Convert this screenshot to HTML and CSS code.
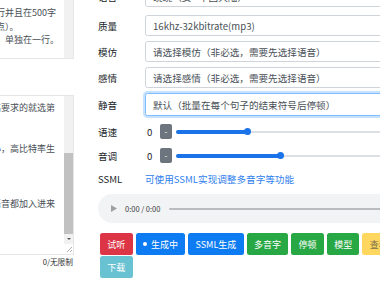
FILE: index.html
```html
<!DOCTYPE html>
<html lang="zh-CN">
<head>
    <meta charset="UTF-8">
    <meta name="viewport" content="width=device-width, initial-scale=1.0">
    <title>文本转语音</title>
    <link rel="stylesheet" href="styles.css">
</head>
<body>
    <div class="page">
        <section class="text-col">
            <div class="textbox box-first">
                <div class="textbox-text">将要转换的文字放在这里，每段一行并且在500字
以内，超出部分会被截断（不含标点）。
多角色对话时，每一个角色的台词，单独在一行。
</div>
                <div class="scrollbar"></div>
            </div>
            <div class="textbox box-second">
                <div class="textbox-text">3、如果对于生成音频的质量有较高要求的就选第
一个选项。
4、质量选项越靠后
5、低比特率生成速度较快文件较小，高比特率生
成速度较慢。
6、多音字请使用SSML功能。
7、停顿可以使用省略号。
8、模型功能会将选中的所有参考语音都加入进来
一起生成。
</div>
                <div class="scrollbar">
                    <div class="sb-track"></div>
                    <div class="sb-thumb"></div>
                    <div class="sb-arrow"><span></span></div>
                    <div class="sb-corner">
                        <svg width="9" height="9" viewBox="0 0 9 9"><path d="M8 3L3 8M8 6L6 8" stroke="#9a9a9a" stroke-width="0.8"/></svg>
                    </div>
                </div>
            </div>
            <div class="counter">0/无限制</div>
        </section>

        <section class="form-col">
            <div class="form-row row-first">
                <label>语音</label>
                <select class="form-control"><option>晓晓（女 - 中国大陆）</option></select>
            </div>
            <div class="form-row">
                <label>质量</label>
                <select class="form-control"><option>16khz-32kbitrate(mp3)</option></select>
            </div>
            <div class="form-row">
                <label>模仿</label>
                <select class="form-control"><option>请选择模仿（非必选，需要先选择语音）</option></select>
            </div>
            <div class="form-row">
                <label>感情</label>
                <select class="form-control"><option>请选择感情（非必选，需要先选择语音）</option></select>
            </div>
            <div class="form-row row-silence">
                <label>静音</label>
                <select class="form-control is-focus"><option>默认（批量在每个句子的结束符号后停顿）</option></select>
            </div>
            <div class="slider-row">
                <label>语速</label>
                <span class="slider-val">0</span>
                <button class="btn-step">-</button>
                <div class="range">
                    <div class="range-track"></div>
                    <div class="range-fill" style="width: 28.2%"></div>
                    <div class="range-thumb" style="left: 28.2%"></div>
                </div>
            </div>
            <div class="slider-row">
                <label>音调</label>
                <span class="slider-val">0</span>
                <button class="btn-step">-</button>
                <div class="range">
                    <div class="range-track"></div>
                    <div class="range-fill" style="width: 41.3%"></div>
                    <div class="range-thumb" style="left: 41.3%"></div>
                </div>
            </div>
            <div class="ssml-row">
                <label>SSML</label>
                <a href="#">可使用SSML实现调整多音字等功能</a>
            </div>
            <div class="player">
                <svg class="play-icon" width="6" height="7" viewBox="0 0 6 7"><path d="M0 0L6 3.5L0 7Z" fill="#a0a0a0"/></svg>
                <span class="player-time">0:00 / 0:00</span>
                <div class="player-bar"></div>
            </div>
            <div class="actions">
                <button class="btn btn-red">试听</button>
                <button class="btn btn-blue"><span class="dot"></span>生成中</button>
                <button class="btn btn-blue">SSML生成</button>
                <button class="btn btn-green">多音字</button>
                <button class="btn btn-green">停顿</button>
                <button class="btn btn-green">模型</button>
                <button class="btn btn-yellow">查看历史</button>
                <button class="btn btn-cyan">下载</button>
            </div>
        </section>
    </div>
</body>
</html>
```

FILE: styles.css
```css
* {
    margin: 0;
    padding: 0;
    box-sizing: border-box;
}

body {
    font-family: "Noto Sans CJK SC", "Noto Sans", sans-serif;
    font-size: 9.6px;
    color: #212529;
    background: #fff;
    width: 380px;
    height: 282px;
    overflow: hidden;
}

.page {
    display: flex;
    align-items: flex-start;
    margin-left: -147px;
    width: 700px;
}

/* left: text input */
.text-col {
    width: 221px;
    flex-shrink: 0;
}

.textbox {
    display: flex;
    border: 1px solid #e4e7ea;
    background: #fff;
}

.textbox-text {
    flex: 1;
    padding: 7px 4px 0 7px;
    font-size: 9px;
    line-height: 13.7px;
    color: #495057;
    white-space: pre;
    overflow: hidden;
}

.box-first {
    height: 61px;
    margin-top: -2px;
}

.box-second {
    height: 160px;
    margin-top: 36px;
}

.box-second .textbox-text {
    padding-top: 5px;
}

.scrollbar {
    width: 9px;
    background: #f1f1f1;
    display: flex;
    flex-direction: column;
}

.sb-track {
    flex: 1;
}

.sb-thumb {
    height: 81px;
    background: #c1c1c1;
}

.sb-arrow {
    height: 10px;
    display: flex;
    align-items: center;
    justify-content: center;
}

.sb-arrow span {
    border-left: 2px solid transparent;
    border-right: 2px solid transparent;
    border-top: 2px solid #555;
}

.sb-corner {
    height: 10px;
    background: #fff;
}

.sb-corner svg {
    display: block;
}

.counter {
    text-align: right;
    font-size: 7.7px;
    line-height: 12px;
    margin-top: 1px;
    padding-right: 1px;
    color: #333;
}

/* right: settings */
.form-col {
    width: 330px;
    flex-shrink: 0;
    margin-left: 24px;
    margin-top: -14px;
}

.form-row {
    display: flex;
    align-items: center;
    margin-bottom: 5px;
}

.form-row.row-first {
    margin-bottom: 8px;
}

.form-row label, .slider-row label, .ssml-row label {
    width: 47px;
    flex-shrink: 0;
}

.form-control {
    flex: 1;
    appearance: none;
    height: 21px;
    padding: 0 7px;
    font-family: inherit;
    font-size: 9.6px;
    color: #495057;
    background: #fff;
    border: 1px solid #ced4da;
    border-radius: 2.5px;
    outline: none;
}

.form-control.is-focus {
    height: 23px;
    border-color: #80bdff;
    box-shadow: 0 0 0 2px rgba(0, 123, 255, 0.22);
}

.row-silence {
    margin-bottom: 6px;
}

.slider-row {
    display: flex;
    align-items: center;
    height: 19px;
    margin-bottom: 5px;
}

.slider-val {
    width: 15px;
    padding-left: 2px;
}

.btn-step {
    width: 12px;
    height: 15px;
    border: none;
    border-radius: 2px;
    background: #6c757d;
    color: #fff;
    font-size: 8px;
    font-family: inherit;
    line-height: 15px;
}

.range {
    flex: 1;
    position: relative;
    height: 8px;
    margin-left: 4px;
    display: flex;
    align-items: center;
}

.range-track {
    width: 100%;
    height: 2px;
    background: #dcdfe3;
}

.range-fill {
    position: absolute;
    left: 0;
    top: 2px;
    height: 4px;
    border-radius: 2px;
    background: #1a73e8;
}

.range-thumb {
    position: absolute;
    top: 0.5px;
    width: 7px;
    height: 7px;
    margin-left: -3.5px;
    border-radius: 50%;
    background: #1a73e8;
}

.ssml-row {
    display: flex;
    align-items: center;
    height: 17px;
    margin-bottom: 7px;
}

.ssml-row a {
    color: #2f80ed;
    text-decoration: none;
}

.player {
    display: flex;
    align-items: center;
    height: 29px;
    border-radius: 15px;
    background: #f1f3f4;
    padding-left: 13px;
    margin-bottom: 10px;
}

.player-time {
    font-family: "Noto Sans CJK SC", sans-serif;
    font-size: 7.5px;
    color: #3c4043;
    margin-left: 8px;
}

.player-bar {
    flex: 1;
    height: 2px;
    border-radius: 1px;
    background: #b9bcbf;
    margin-left: 9px;
}

.actions {
    display: flex;
    flex-wrap: wrap;
    gap: 1px 3px;
    margin-left: 2px;
}

.btn {
    height: 22px;
    padding: 0 7.3px;
    border: none;
    border-radius: 2.5px;
    font-family: inherit;
    font-size: 9px;
    color: #fff;
    display: flex;
    align-items: center;
}

.btn-red { background: #dc3545; }
.btn-blue { background: #0d7cf2; }
.btn-green { background: #28a745; }
.btn-yellow { background: #ffd65e; color: #7a6f4b; }
.btn-cyan { background: #68c2d1; }

.dot {
    width: 4px;
    height: 4px;
    border-radius: 50%;
    background: #fff;
    margin-right: 4px;
}
```
